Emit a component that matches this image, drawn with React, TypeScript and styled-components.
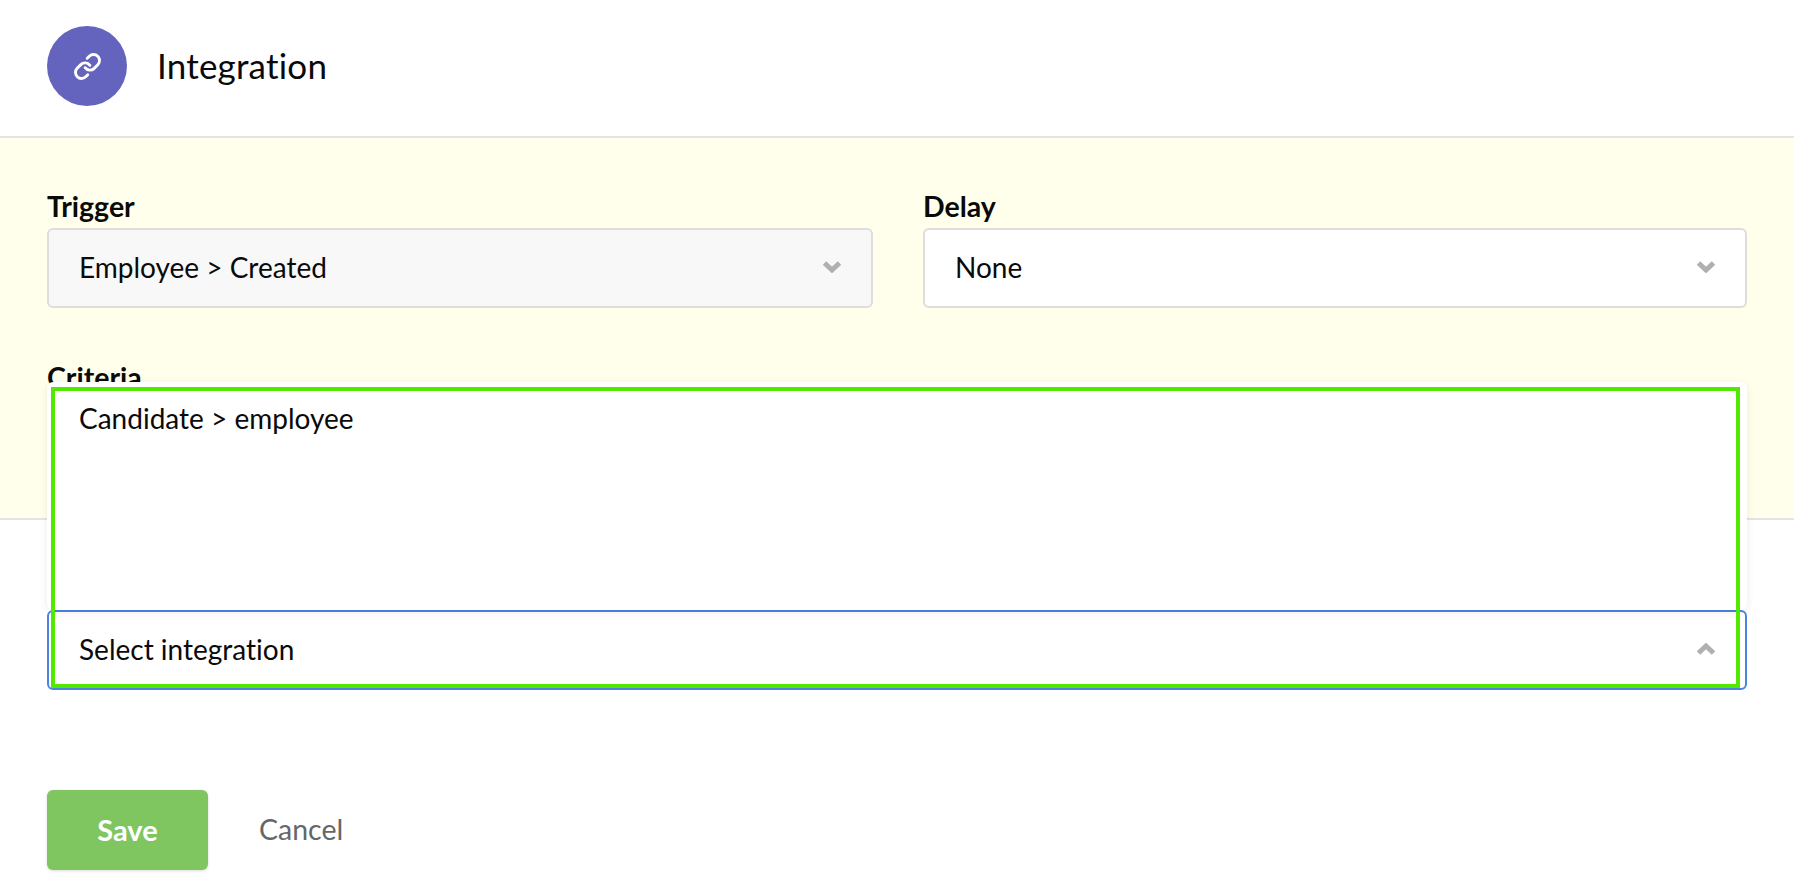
import React from "react";
import styled, { createGlobalStyle } from "styled-components";
import { Link } from "lucide-react";

const GlobalStyle = createGlobalStyle`
  html, body {
    margin: 0;
    padding: 0;
    background: #fff;
    overflow: hidden;
  }
  body {
    font-family: "Lato", "Liberation Sans", sans-serif;
    font-variant-ligatures: none;
    color: #0a0a0a;
  }
`;

const Page = styled.div`
  width: 1794px;
  height: 878px;
`;

const Header = styled.header`
  display: flex;
  align-items: center;
  gap: 30px;
  height: 132px;
  padding: 0 47px 4px;
  border-bottom: 2px solid #e4e4e4;
`;

const IconCircle = styled.div`
  display: flex;
  align-items: center;
  justify-content: center;
  width: 80px;
  height: 80px;
  border-radius: 50%;
  background: #6464be;
  color: #fff;
`;

const Title = styled.h1`
  margin: 0 0 3px;
  font-size: 35px;
  font-weight: 400;
  letter-spacing: 0.2px;
`;

const TriggerPanel = styled.section`
  display: flex;
  flex-direction: column;
  gap: 54px;
  height: 382px;
  box-sizing: border-box;
  padding: 53px 47px 0;
  background: #ffffeb;
  border-bottom: 2px solid #e4e4e4;
`;

const Row = styled.div`
  display: grid;
  grid-template-columns: 826px 824px;
  gap: 50px;
`;

const Field = styled.div`
  position: relative;
`;

const Label = styled.label`
  display: block;
  margin-bottom: 7px;
  font-size: 28.5px;
  font-weight: 700;
  line-height: 30px;
`;

const Select = styled.div<{ $muted?: boolean; $open?: boolean }>`
  display: flex;
  align-items: center;
  justify-content: space-between;
  height: 80px;
  box-sizing: border-box;
  padding: 0 30px 3px;
  border: 2px solid ${(props) => (props.$open ? "#4a86e0" : "#dddddd")};
  border-radius: 6px;
  background: ${(props) => (props.$muted ? "#f8f8f8" : "#fff")};
  font-size: 28px;
`;

const Chevron = styled.svg`
  width: 18px;
  height: 12px;
  fill: none;
  stroke: #b0b0b0;
  stroke-width: 5;
  flex-shrink: 0;
`;

const IntegrationPanel = styled.section`
  padding: 90px 47px 0;
`;

const Menu = styled.div`
  position: absolute;
  left: 0;
  right: 0;
  bottom: 100%;
  height: 228px;
  box-sizing: border-box;
  padding: 18px 32px;
  background: #fff;
  border-radius: 6px;
  box-shadow: 0 2px 8px rgba(0, 0, 0, 0.08);
  font-size: 28px;
  line-height: 36px;
`;

// hand-drawn annotation that sits over the open dropdown
const Highlight = styled.div`
  position: absolute;
  left: 4px;
  top: -223px;
  width: 1689px;
  height: 301px;
  box-sizing: border-box;
  border: 4px solid #52e800;
  pointer-events: none;
`;

const Actions = styled.div`
  display: flex;
  align-items: center;
  gap: 51px;
  margin-top: 100px;
  padding: 0 47px;
`;

const SaveButton = styled.button`
  width: 161px;
  height: 80px;
  padding: 0 0 2px;
  border: none;
  border-radius: 6px;
  background: #7fc660;
  box-shadow: 0 1px 3px rgba(0, 0, 0, 0.15);
  color: #fff;
  font-family: inherit;
  font-size: 29px;
  font-weight: 700;
`;

const CancelButton = styled.button`
  padding: 0 0 2px;
  border: none;
  background: transparent;
  color: #666;
  font-family: inherit;
  font-size: 28.5px;
`;

const ChevronDown = () => (
  <Chevron viewBox="0 0 18 12">
    <polyline points="1.5,2 9,9 16.5,2" />
  </Chevron>
);

const ChevronUp = () => (
  <Chevron viewBox="0 0 18 12">
    <polyline points="1.5,10 9,3 16.5,10" />
  </Chevron>
);

export default function App() {
  return (
    <Page>
      <GlobalStyle />
      <Header>
        <IconCircle>
          <Link size={29} strokeWidth={2.4} />
        </IconCircle>
        <Title>Integration</Title>
      </Header>

      <TriggerPanel>
        <Row>
          <Field>
            <Label>Trigger</Label>
            <Select $muted>
              Employee &gt; Created
              <ChevronDown />
            </Select>
          </Field>
          <Field>
            <Label>Delay</Label>
            <Select>
              None
              <ChevronDown />
            </Select>
          </Field>
        </Row>
        <Field>
          <Label>Criteria</Label>
        </Field>
      </TriggerPanel>

      <IntegrationPanel>
        <Field>
          <Menu>Candidate &gt; employee</Menu>
          <Select $open>
            Select integration
            <ChevronUp />
          </Select>
          <Highlight />
        </Field>
      </IntegrationPanel>

      <Actions>
        <SaveButton>Save</SaveButton>
        <CancelButton>Cancel</CancelButton>
      </Actions>
    </Page>
  );
}
